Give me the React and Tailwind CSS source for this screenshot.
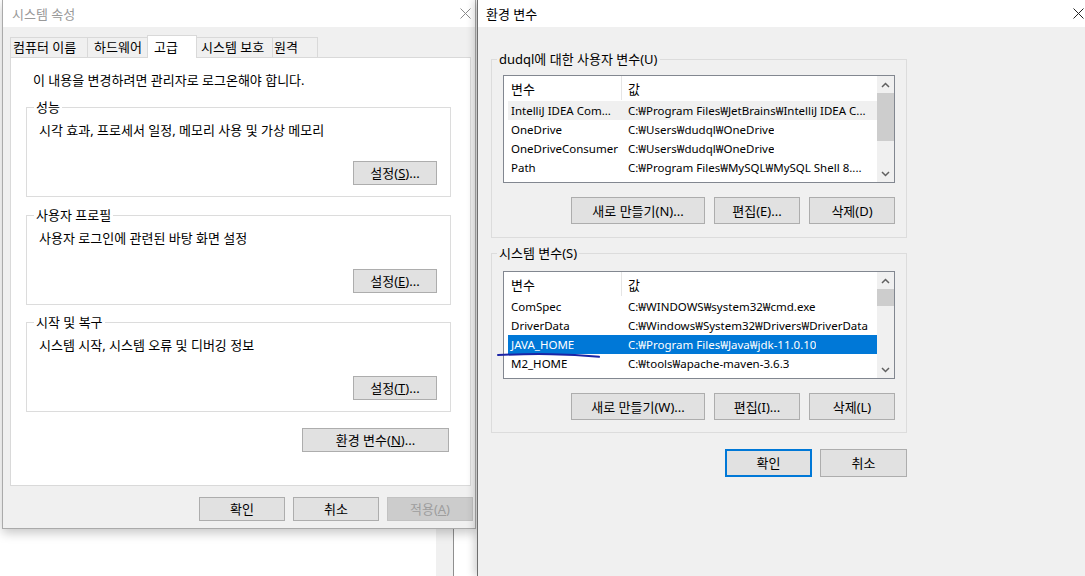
import React from "react";

const FONT = "font-['Noto_Sans','Noto_Sans_CJK_KR',sans-serif]";

function XIcon({ color }) {
  return (
    <svg width="11" height="11" viewBox="0 0 11 11">
      <path d="M0.5 0.5 L10.5 10.5 M10.5 0.5 L0.5 10.5" stroke={color} strokeWidth="1" fill="none" />
    </svg>
  );
}

function Chevron({ up }) {
  return (
    <svg width="9" height="6" viewBox="0 0 9 6">
      <path d={up ? "M1 5 L4.5 1.5 L8 5" : "M1 1 L4.5 4.5 L8 1"} stroke="#606060" strokeWidth="1.5" fill="none" />
    </svg>
  );
}

function Btn({ children, className = "" }) {
  return (
    <div className={"flex items-center justify-center bg-[#e1e1e1] text-black whitespace-nowrap " + className}>
      {children}
    </div>
  );
}

function LeftGroup({ title, desc, btn, className = "" }) {
  return (
    <div className={"relative ml-[15px] w-[425px] h-[90px] border border-[#dcdcdc] flex flex-col pl-[12px] pr-[13px] pt-[14px] pb-[11px] " + className}>
      <span className="absolute -top-[9px] left-[7px] px-[2px] bg-white leading-[16px]">{title}</span>
      <div>{desc}</div>
      <Btn className="mt-auto self-end w-[84px] h-[24px] border border-[#adadad]">{btn}</Btn>
    </div>
  );
}

function LeftWindow() {
  return (
    <div className="absolute left-[2px] top-0 w-[474px] h-[529px] flex flex-col border-x border-b border-[#aaaaaa] bg-[#f0f0f0] shadow-[0_4px_10px_rgba(0,0,0,0.22)]">
      <div className="h-[27px] shrink-0 bg-white flex items-center justify-between pl-[9px] pr-[4px]">
        <span className="text-[#999999]">시스템 속성</span>
        <XIcon color="#8a8a8a" />
      </div>
      <div className="flex flex-col pt-[8px] pl-[7px]">
        <div className="flex items-end h-[22px]">
          <div className="w-[77px] h-[20px] border-l border-t border-[#d9d9d9] pl-[2px] pt-[1px] whitespace-nowrap">컴퓨터 이름</div>
          <div className="w-[60px] h-[20px] border-l border-t border-[#d9d9d9] pl-[6px] pt-[1px] whitespace-nowrap">하드웨어</div>
          <div className="relative z-10 w-[50px] h-[23px] -mb-[1px] border-l border-t border-r border-[#d9d9d9] bg-white pl-[6px] pt-[3px] whitespace-nowrap">고급</div>
          <div className="w-[75px] h-[20px] border-t border-[#d9d9d9] pl-[4px] pt-[1px] whitespace-nowrap">시스템 보호</div>
          <div className="w-[46px] h-[20px] border-l border-t border-r border-[#d9d9d9] pl-[1px] pt-[1px] whitespace-nowrap">원격</div>
        </div>
        <div className="w-[461px] h-[429px] bg-white border border-[#d9d9d9] flex flex-col">
          <div className="pl-[22px] pt-[14px]">이 내용을 변경하려면 관리자로 로그온해야 합니다.</div>
          <LeftGroup
            className="mt-[19px]"
            title="성능"
            desc="시각 효과, 프로세서 일정, 메모리 사용 및 가상 메모리"
            btn={<>설정(<span className="underline">S</span>)...</>}
          />
          <LeftGroup
            className="mt-[18px]"
            title="사용자 프로필"
            desc="사용자 로그인에 관련된 바탕 화면 설정"
            btn={<>설정(<span className="underline">E</span>)...</>}
          />
          <LeftGroup
            className="mt-[17px]"
            title="시작 및 복구"
            desc="시스템 시작, 시스템 오류 및 디버깅 정보"
            btn={<>설정(<span className="underline">T</span>)...</>}
          />
          <div className="ml-[15px] w-[425px] flex justify-end pr-[2px] mt-[16px]">
            <Btn className="w-[147px] h-[24px] border border-[#adadad]">
              환경 변수(<span className="underline">N</span>)...
            </Btn>
          </div>
        </div>
        <div className="mt-[11px] flex justify-end gap-[8px] pr-[2px]">
          <Btn className="w-[86px] h-[24px] border border-[#adadad]">확인</Btn>
          <Btn className="w-[86px] h-[24px] border border-[#adadad]">취소</Btn>
          <div className="w-[86px] h-[24px] flex items-center justify-center bg-[#cccccc] border border-[#c2c2c2] text-[#9d9d9d]">
            적용(<span className="underline">A</span>)
          </div>
        </div>
      </div>
    </div>
  );
}

function VarList({ rows, heightClass, thumbClass }) {
  return (
    <div className={"w-[392px] border border-[#828790] bg-white flex overflow-hidden " + heightClass}>
      <div className="flex-1 flex flex-col pl-[4px] overflow-hidden">
        <div className="h-[25px] shrink-0 flex items-center">
          <div className="w-[113px] pl-[3px]">변수</div>
          <div className="w-px h-[24px] self-start bg-[#e5e5e5]" />
          <div className="pl-[6px]">값</div>
        </div>
        {rows.map((r, i) => (
          <div
            key={i}
            className={
              "h-[19px] shrink-0 flex items-center whitespace-nowrap text-[11.5px] " +
              (r.sel === "blue" ? "bg-[#0078d7] text-white" : r.sel === "grey" ? "bg-[#f0f0f0]" : "")
            }
          >
            <div className="w-[113px] shrink-0 pl-[3px] overflow-hidden">{r.name}</div>
            <div className="pl-[7px] overflow-hidden">{r.value}</div>
          </div>
        ))}
      </div>
      <div className="w-[17px] shrink-0 bg-[#f0f0f0] flex flex-col">
        <div className="h-[17px] flex items-center justify-center">
          <Chevron up />
        </div>
        <div className={"bg-[#cdcdcd] " + thumbClass} />
        <div className="flex-1" />
        <div className="h-[17px] flex items-center justify-center">
          <Chevron />
        </div>
      </div>
    </div>
  );
}

function RightGroup({ title, list, buttons, className = "" }) {
  return (
    <div className={"relative w-[416px] border border-[#dcdcdc] flex flex-col pl-[11px] pb-[12px] " + className}>
      <span className="absolute -top-[9px] left-[5px] px-[2px] bg-[#f0f0f0] leading-[16px]">{title}</span>
      {list}
      <div className="w-[392px] mt-[14px] flex justify-end gap-[9px]">
        <Btn className="w-[134px] h-[27px] border border-[#adadad]">{buttons[0]}</Btn>
        <Btn className="w-[86px] h-[27px] border border-[#adadad]">{buttons[1]}</Btn>
        <Btn className="w-[86px] h-[27px] border border-[#adadad]">{buttons[2]}</Btn>
      </div>
    </div>
  );
}

const userRows = [
  { name: "IntelliJ IDEA Com...", value: "C:₩Program Files₩JetBrains₩IntelliJ IDEA C...", sel: "grey" },
  { name: "OneDrive", value: "C:₩Users₩dudql₩OneDrive" },
  { name: "OneDriveConsumer", value: "C:₩Users₩dudql₩OneDrive" },
  { name: "Path", value: "C:₩Program Files₩MySQL₩MySQL Shell 8...." },
  { name: "TEMP", value: "C:₩Users₩dudql₩AppData₩Local₩Temp" },
];

const sysRows = [
  { name: "ComSpec", value: "C:₩WINDOWS₩system32₩cmd.exe" },
  { name: "DriverData", value: "C:₩Windows₩System32₩Drivers₩DriverData" },
  { name: "JAVA_HOME", value: "C:₩Program Files₩Java₩jdk-11.0.10", sel: "blue" },
  { name: "M2_HOME", value: "C:₩tools₩apache-maven-3.6.3" },
];

function RightWindow() {
  return (
    <div className="absolute left-[477px] top-0 w-[620px] h-[576px] flex flex-col border-l border-[#6e6e6e] bg-[#f0f0f0] shadow-[-3px_0_8px_rgba(0,0,0,0.18)]">
      <div className="h-[27px] shrink-0 bg-white flex items-center justify-between pl-[8px] pr-[13px]">
        <span>환경 변수</span>
        <XIcon color="#222222" />
      </div>
      <div className="flex flex-col pl-[13px]">
        <RightGroup
          className="mt-[32px] h-[179px] pt-[15px]"
          title="dudql에 대한 사용자 변수(U)"
          list={<VarList rows={userRows} heightClass="h-[108px]" thumbClass="h-[48px]" />}
          buttons={["새로 만들기(N)...", "편집(E)...", "삭제(D)"]}
        />
        <RightGroup
          className="mt-[15px] h-[180px] pt-[17px]"
          title="시스템 변수(S)"
          list={<VarList rows={sysRows} heightClass="h-[108px]" thumbClass="h-[17px]" />}
          buttons={["새로 만들기(W)...", "편집(I)...", "삭제(L)"]}
        />
        <div className="w-[416px] mt-[16px] flex justify-end gap-[8px]">
          <Btn className="w-[87px] h-[28px] border-2 border-[#0078d7]">확인</Btn>
          <Btn className="w-[87px] h-[28px] border border-[#adadad]">취소</Btn>
        </div>
      </div>
    </div>
  );
}

export default function App() {
  return (
    <div className={"relative w-[1085px] h-[576px] overflow-hidden bg-white text-[13px] leading-[16px] text-black " + FONT}>
      <div className="absolute left-[436px] top-0 w-[18px] h-full bg-[#f0f0f0] border-r border-[#8f8f8f]" />
      <LeftWindow />
      <RightWindow />
      <svg className="absolute left-[497px] top-[350px]" width="106" height="10" viewBox="0 0 106 10">
        <path d="M1 5 Q 30 3.8 54 4.2 T 102 6.8" stroke="#1b24a6" strokeWidth="2" fill="none" strokeLinecap="round" />
      </svg>
    </div>
  );
}
